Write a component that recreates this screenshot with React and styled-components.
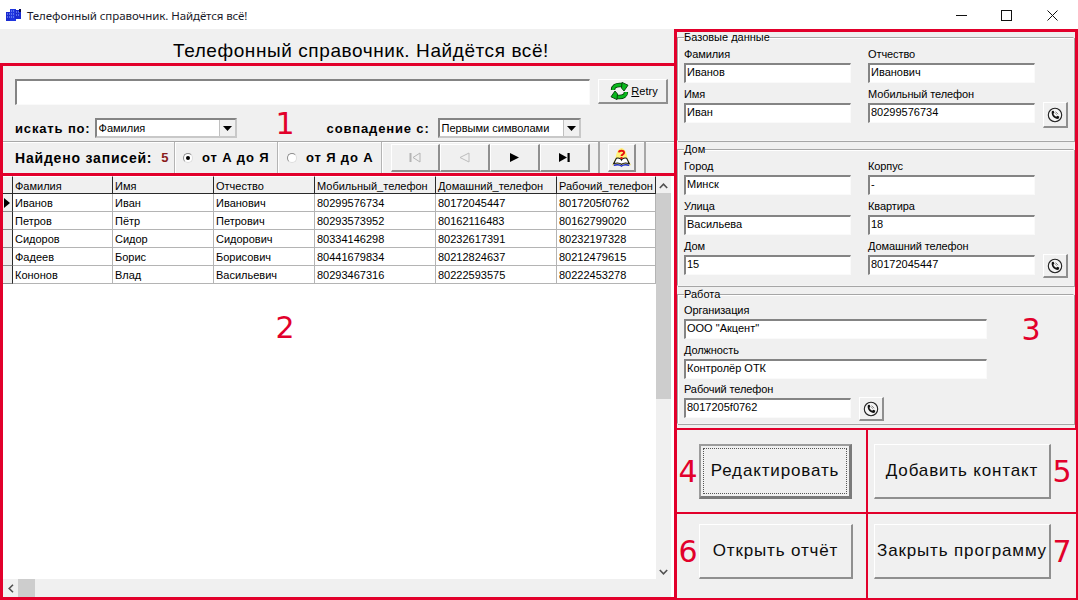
import React from "react";
import styled, { createGlobalStyle } from "styled-components";

const RED = "#e2002b";
const UI = `"Liberation Sans", Arial, sans-serif`;

const Global = createGlobalStyle`
  html, body { margin: 0; padding: 0; background: #f0f0f0; overflow: hidden; }
  #root { width: 1078px; height: 600px; }
  * { box-sizing: border-box; }
`;

const Win = styled.div`
  position: relative;
  width: 1078px;
  height: 600px;
  display: flex;
  flex-direction: column;
  background: #f0f0f0;
  font: 11px ${UI};
  color: #000;
`;

const TitleBar = styled.header`
  height: 29px;
  flex: none;
  background: #fff;
  display: flex;
  align-items: center;
  padding-left: 6px;
  padding-top: 1px;
  padding-right: 3px;
`;
const TitleText = styled.span`
  margin-left: 5px;
  font: 11.5px "Noto Sans", sans-serif;
  letter-spacing: -0.08px;
  color: #1a1a2a;
  flex: 1;
`;
const WinControls = styled.div`
  display: flex;
  align-self: stretch;
`;
const WinButton = styled.div`
  width: 45.5px;
  display: flex;
  align-items: center;
  justify-content: center;
`;

const Body = styled.main`
  flex: 1;
  display: grid;
  grid-template-columns: 674px 404px;
  min-height: 0;
`;
const Left = styled.section`
  display: flex;
  flex-direction: column;
  min-height: 0;
`;
const AppHeading = styled.h1`
  margin: 0;
  height: 34px;
  flex: none;
  padding-top: 12px;
  padding-left: 48px;
  text-align: center;
  font: 400 19px/20px ${UI};
  letter-spacing: 0.58px;
`;
const SearchPanel = styled.section`
  height: 113px;
  flex: none;
  border-top: 3px solid ${RED};
  border-left: 3px solid ${RED};
  border-bottom: 3px solid ${RED};
  display: flex;
  flex-direction: column;
`;
const SearchTop = styled.div`
  padding: 13px 6px 0 12px;
  height: 75px;
  flex: none;
`;
const QueryRow = styled.div`
  display: flex;
  gap: 8px;
`;
const inset = `
  background: #fff;
  border-style: solid;
  border-width: 2px 1px 1px 2px;
  border-color: #848484 #fafafa #fafafa #848484;
`;
const QueryInput = styled.div`
  ${inset}
  width: 575px;
  height: 26px;
`;
const RaisedButton = styled.div`
  background: #f0f0f0;
  border-style: solid;
  border-width: 1px 2px 2px 1px;
  border-color: #fff #8f8f8f #8f8f8f #fff;
  display: flex;
  align-items: center;
  justify-content: center;
`;
const RetryButton = styled(RaisedButton)`
  width: 70px;
  height: 25px;
  gap: 2px;
  padding-left: 3px;
  font: 11px ${UI};
`;
const Mnemonic = styled.span`
  text-decoration: underline;
`;
const FilterRow = styled.div`
  display: flex;
  align-items: center;
  margin-top: 13px;
  height: 20px;
`;
const BoldLabel = styled.span`
  font: 700 13px ${UI};
  letter-spacing: 0.85px;
  white-space: nowrap;
`;
const CountLabel = styled(BoldLabel)`
  font-size: 14px;
  letter-spacing: 0.8px;
`;
const Combo = styled.div`
  width: ${(p) => p.$w}px;
  height: 20px;
  margin-left: ${(p) => p.$ml}px;
  margin-right: ${(p) => p.$mr || 0}px;
  display: flex;
  align-items: center;
  background: #fff;
  border-style: solid;
  border-width: 2px 2px 2px 2px;
  border-color: #848484 #c8c8c8 #c8c8c8 #848484;
  padding-left: 2px;
  font: 11px ${UI};
`;
const ComboText = styled.span`
  flex: 1;
`;
const ComboArrow = styled.div`
  width: 16px;
  align-self: stretch;
  background: #f0f0f0;
  border-left: 1px solid #c0c0c0;
  display: flex;
  align-items: center;
  justify-content: center;
`;
const Toolbar = styled.div`
  flex: 1;
  display: flex;
  border-top: 1px solid #a8a8a8;
  box-shadow: inset 0 1px 0 #fff;
`;
const ToolCell = styled.div`
  width: ${(p) => p.$w}px;
  flex: none;
  display: flex;
  align-items: center;
  padding-left: ${(p) => p.$pl}px;
  border-right: 1px solid #b4b4b4;
  box-shadow: 1px 0 0 #fff;
`;
const Count = styled.span`
  margin-left: 9px;
  font: 700 13px ${UI};
  color: #8a1c1c;
`;
const Radio = styled.span`
  width: 10px;
  height: 10px;
  margin-right: 9px;
  border-radius: 50%;
  background: #fff;
  border: 1px solid #8c8c8c;
  border-right-color: #ddd;
  border-bottom-color: #ddd;
  display: flex;
  align-items: center;
  justify-content: center;
  &::after {
    content: "";
    width: 4px;
    height: 4px;
    border-radius: 50%;
    background: ${(p) => (p.$on ? "#000" : "transparent")};
  }
`;
const NavGroup = styled.div`
  display: flex;
  padding: 2px 0 1px 9px;
  width: 216px;
  flex: none;
`;
const NavButton = styled(RaisedButton)`
  width: ${(p) => p.$w || 50}px;
`;
const BookCell = styled.div`
  width: 48px;
  flex: none;
  display: flex;
  padding: 2px 8px 1px 8px;
  border-left: 2px solid #a8a8a8;
  border-right: 2px solid #a8a8a8;
`;
const BookButton = styled(RaisedButton)`
  width: 32px;
`;

const TablePanel = styled.section`
  flex: 1;
  min-height: 0;
  border-left: 3px solid ${RED};
  border-bottom: 3px solid ${RED};
  display: grid;
  grid-template-columns: 653px 15px 3px;
  grid-template-rows: 1fr 18px;
  background: #fff;
`;
const TableView = styled.div`
  overflow: hidden;
  background: #fff;
`;
const Grid = styled.table`
  table-layout: fixed;
  border-collapse: separate;
  border-spacing: 0;
  width: 653px;
  font: 11px ${UI};
`;
const HeadCell = styled.th`
  height: 18px;
  padding: 1px 0 0 2px;
  font-weight: 400;
  text-align: left;
  white-space: nowrap;
  overflow: hidden;
  background: #f0f0f0;
  border-top: 1px solid #fff;
  border-right: 1px solid #2a2a2a;
  border-bottom: 1px solid #2a2a2a;
`;
const Cell = styled.td`
  height: 18px;
  padding: 0 0 0 2px;
  white-space: nowrap;
  overflow: hidden;
  border-right: 1px solid #b4b4b4;
  border-bottom: 1px solid #b4b4b4;
`;
const IndicatorCell = styled.td`
  height: 18px;
  padding: 0 0 0 1px;
  background: #f0f0f0;
  border-right: 1px solid #2a2a2a;
  border-bottom: 1px solid #8c8c8c;
`;
const VScroll = styled.div`
  grid-column: 2;
  grid-row: 1;
  display: flex;
  flex-direction: column;
  background: #f0f0f0;
  padding-top: 2px;
`;
const ScrollEnd = styled.div`
  height: 15px;
  flex: none;
  display: flex;
  align-items: center;
  justify-content: center;
`;
const VThumb = styled.div`
  height: 206px;
  background: #cdcdcd;
`;
const Spacer = styled.div`
  flex: 1;
`;
const HScroll = styled.div`
  grid-column: 1 / 3;
  grid-row: 2;
  display: flex;
  align-items: stretch;
  background: #f0f0f0;
`;
const HEnd = styled.div`
  width: 15px;
  flex: none;
  display: flex;
  align-items: center;
  justify-content: center;
`;
const HThumb = styled.div`
  width: 17px;
  background: #cdcdcd;
`;

const Right = styled.aside`
  display: flex;
  flex-direction: column;
  min-height: 0;
`;
const InfoPanel = styled.section`
  height: 401px;
  flex: none;
  border-style: solid;
  border-color: ${RED};
  border-width: 3px 3px 2px 3px;
  padding-right: 1px;
`;
const Group = styled.fieldset`
  margin: ${(p) => p.$mt}px 0 0 0;
  height: ${(p) => p.$h}px;
  padding: ${(p) => p.$pt}px 0 0 6px;
  min-width: 0;
  border-color: #a6a6a6 #f4f4f4 #f4f4f4 #a6a6a6;
  border-style: solid;
  border-width: 1px;
  box-shadow: inset 1px 1px 0 #fff, 1px 1px 0 #a6a6a6;
`;
const GroupTitle = styled.legend`
  padding: 0;
  margin-left: 0;
  font: 11px/13px ${UI};
`;
const FieldGrid = styled.div`
  display: grid;
  grid-template-columns: 167px 167px;
  column-gap: 17px;
  row-gap: 4px;
`;
const FieldColumn = styled.div`
  display: flex;
  flex-direction: column;
  gap: ${(p) => p.$gap}px;
`;
const Field = styled.div`
  display: flex;
  flex-direction: column;
  height: 36px;
  margin-top: ${(p) => p.$pull || 0}px;
`;
const FieldLabel = styled.label`
  height: 16px;
  flex: none;
  font: 11px/14px ${UI};
  letter-spacing: -0.1px;
  white-space: nowrap;
`;
const InputRow = styled.div`
  display: flex;
  flex: none;
  gap: 8px;
  align-items: flex-start;
`;
const TextBox = styled.div`
  ${inset}
  width: ${(p) => p.$w || 167}px;
  height: 20px;
  flex: none;
  padding-left: 1px;
  font: 11px/15px ${UI};
  white-space: nowrap;
`;
const PhoneButton = styled(RaisedButton)`
  width: 25px;
  height: ${(p) => p.$h || 24}px;
  flex: none;
  margin-top: -1px;
`;

const ActionGrid = styled.section`
  flex: 1;
  display: grid;
  grid-template-columns: 194px 210px;
  grid-template-rows: 84px 86px;
`;
const ActionCell = styled.div`
  border-style: solid;
  border-color: ${RED};
  border-width: 0 2px 2px ${(p) => (p.$first ? 3 : 0)}px;
  padding: ${(p) => p.$pt}px 0 0 ${(p) => (p.$first ? 22 : 6)}px;
`;
const ActionButton = styled(RaisedButton)`
  width: ${(p) => p.$w}px;
  height: 55px;
  font: 17px ${UI};
  letter-spacing: 0.85px;
  white-space: nowrap;
  color: #0c0c0c;
`;
const FocusedButton = styled(ActionButton)`
  position: relative;
  border-width: 2px 3px 3px 2px;
  border-color: #9c9c9c #7a7a7a #7a7a7a #9c9c9c;
  &::after {
    content: "";
    position: absolute;
    inset: 2px;
    border: 1px dotted #555;
  }
`;
const Badge = styled.span`
  position: absolute;
  left: ${(p) => p.$x}px;
  top: ${(p) => p.$y}px;
  transform: translate(-50%, -50%);
  font: 400 30px/1 "DejaVu Sans", sans-serif;
  color: ${RED};
`;

const AppIcon = () => (
  <svg width="16" height="14" viewBox="0 0 16 14">
    <rect x="0" y="4" width="5" height="9" fill="#1a2bd0" />
    <rect x="4" y="1" width="6" height="12" fill="#2036e0" />
    <rect x="9" y="2" width="6" height="9" fill="#1a2bd0" />
    <path d="M1 6h3M1 9h3M5 3h4M5 6h4M5 9h4M10 4h4M10 7h4" stroke="#9ab4ff" strokeWidth="1" strokeDasharray="1 1" />
    <rect x="13" y="1" width="2" height="3" fill="#0a0a50" />
  </svg>
);

const RetryIcon = () => (
  <svg width="19" height="18" viewBox="0 0 19 18" fill="none">
    <path d="M3 8C3 4.5 6 3 9.5 3H12" stroke="#063a0a" strokeWidth="4.4" />
    <path d="M16 10C16 13.5 13 15 9.5 15H7" stroke="#063a0a" strokeWidth="4.4" />
    <path d="M3 8C3 4.5 6 3 9.5 3H12" stroke="#08b81c" strokeWidth="2.8" />
    <path d="M16 10C16 13.5 13 15 9.5 15H7" stroke="#08b81c" strokeWidth="2.8" />
    <path d="M12 0.4L18 3.2L14 9L11.5 6Z" fill="#08b81c" stroke="#063a0a" strokeWidth="0.9" />
    <path d="M7 17.6L1 14.8L5 9L7.5 12Z" fill="#08b81c" stroke="#063a0a" strokeWidth="0.9" />
  </svg>
);

const PhoneIcon = () => (
  <svg width="16" height="16" viewBox="0 0 16 16">
    <circle cx="8" cy="8" r="6.7" fill="#f4f4f4" stroke="#222" strokeWidth="1.1" />
    <path d="M5 4 L6.6 3.7 L7.4 5.8 L6.4 6.7 C6.8 8 7.9 9.2 9.3 9.7 L10.2 8.7 L12.2 9.6 L12 11.2 C10.8 12.3 9 12 7.4 10.8 C5.4 9.4 4 6.4 5 4 Z" fill="#111" />
    <path d="M8.6 4.6 L11.2 7.2 M8.2 6 L9.8 7.6" stroke="#888" strokeWidth="1" />
  </svg>
);

const DownCaret = () => (
  <svg width="9" height="5" viewBox="0 0 9 5"><path d="M0 0H9L4.5 5Z" fill="#000" /></svg>
);

const NavFirst = () => (
  <svg width="12" height="11" viewBox="0 0 12 11" fill="none" stroke="#b4b4b4">
    <path d="M1.5 1V10" strokeWidth="2" /><path d="M11 1L4 5.5L11 10Z" />
  </svg>
);
const NavPrev = () => (
  <svg width="11" height="11" viewBox="0 0 11 11" fill="none" stroke="#bcbcbc"><path d="M10 1L1 5.5L10 10Z" /></svg>
);
const NavNext = () => (
  <svg width="9" height="9" viewBox="0 0 9 9"><path d="M0 0L9 4.5L0 9Z" fill="#000" /></svg>
);
const NavLast = () => (
  <svg width="11" height="9" viewBox="0 0 11 9"><path d="M0 0L8 4.5L0 9Z" fill="#000" /><rect x="8.5" y="0" width="2.2" height="9" fill="#000" /></svg>
);

const BookIcon = () => (
  <svg width="19" height="19" viewBox="0 0 22 22">
    <path d="M11 0C16 1 17 7 18 12L22 20H0L4 12C5 7 6 1 11 0Z" fill="#fff27a" />
    <path d="M2 18L5 12C7 11 10 12 11 14C12 12 15 11 17 12L20 18C16 17 13 17 11 19C9 17 6 17 2 18Z" fill="#fff" stroke="#111" strokeWidth="1.3" />
    <path d="M2 20C6 19 9 19 11 21C13 19 16 19 20 20" fill="none" stroke="#1a2bd0" strokeWidth="1.6" />
    <path d="M8 5C8.2 2.6 14 2.4 14 5.4C14 7.4 11 7.4 11 9.4" fill="none" stroke="#e81010" strokeWidth="2.2" />
    <rect x="9.8" y="10.4" width="2.4" height="2.2" fill="#e81010" />
  </svg>
);

const columns = [
  ["", 10],
  ["Фамилия", 100],
  ["Имя", 101],
  ["Отчество", 101],
  ["Мобильный_телефон", 121],
  ["Домашний_телефон", 121],
  ["Рабочий_телефон", 99],
];
const rows = [
  ["Иванов", "Иван", "Иванович", "80299576734", "80172045447", "8017205f0762"],
  ["Петров", "Пётр", "Петрович", "80293573952", "80162116483", "80162799020"],
  ["Сидоров", "Сидор", "Сидорович", "80334146298", "80232617391", "80232197328"],
  ["Фадеев", "Борис", "Борисович", "80441679834", "80212824637", "80212479615"],
  ["Кононов", "Влад", "Васильевич", "80293467316", "80222593575", "80222453278"],
];

const LabeledBox = ({ label, value, w, pull, children }) => (
  <Field $pull={pull}>
    <FieldLabel>{label}</FieldLabel>
    <InputRow>
      <TextBox $w={w}>{value}</TextBox>
      {children}
    </InputRow>
  </Field>
);

export default function App() {
  return (
    <Win>
      <Global />
      <TitleBar>
        <AppIcon />
        <TitleText>Телефонный справочник. Найдётся всё!</TitleText>
        <WinControls>
          <WinButton>
            <svg width="11" height="11" viewBox="0 0 11 11"><path d="M0 5.5H11" stroke="#111" /></svg>
          </WinButton>
          <WinButton>
            <svg width="11" height="11" viewBox="0 0 11 11"><rect x="0.5" y="0.5" width="10" height="10" fill="none" stroke="#111" /></svg>
          </WinButton>
          <WinButton>
            <svg width="11" height="11" viewBox="0 0 11 11"><path d="M0.5 0.5L10.5 10.5M10.5 0.5L0.5 10.5" stroke="#111" /></svg>
          </WinButton>
        </WinControls>
      </TitleBar>
      <Body>
        <Left>
          <AppHeading>Телефонный справочник. Найдётся всё!</AppHeading>
          <SearchPanel>
            <SearchTop>
              <QueryRow>
                <QueryInput />
                <RetryButton>
                  <RetryIcon />
                  <span><Mnemonic>R</Mnemonic>etry</span>
                </RetryButton>
              </QueryRow>
              <FilterRow>
                <BoldLabel>искать по:</BoldLabel>
                <Combo $w={142} $ml={4} $mr={90}>
                  <ComboText>Фамилия</ComboText>
                  <ComboArrow><DownCaret /></ComboArrow>
                </Combo>
                <BoldLabel>совпадение с:</BoldLabel>
                <Combo $w={143} $ml={8}>
                  <ComboText>Первыми символами</ComboText>
                  <ComboArrow><DownCaret /></ComboArrow>
                </Combo>
              </FilterRow>
            </SearchTop>
            <Toolbar>
              <ToolCell $w={172} $pl={12}>
                <CountLabel>Найдено записей:</CountLabel>
                <Count>5</Count>
              </ToolCell>
              <ToolCell $w={103} $pl={8}>
                <Radio $on />
                <BoldLabel>от А до Я</BoldLabel>
              </ToolCell>
              <ToolCell $w={104} $pl={9}>
                <Radio />
                <BoldLabel>от Я до А</BoldLabel>
              </ToolCell>
              <NavGroup>
                <NavButton $w={49}><NavFirst /></NavButton>
                <NavButton><NavPrev /></NavButton>
                <NavButton><NavNext /></NavButton>
                <NavButton><NavLast /></NavButton>
              </NavGroup>
              <BookCell>
                <BookButton><BookIcon /></BookButton>
              </BookCell>
            </Toolbar>
          </SearchPanel>
          <TablePanel>
            <TableView>
              <Grid>
                <colgroup>
                  {columns.map(([name, w]) => (
                    <col key={name} width={w} />
                  ))}
                </colgroup>
                <thead>
                  <tr>
                    {columns.map(([name]) => (
                      <HeadCell key={name}>{name}</HeadCell>
                    ))}
                  </tr>
                </thead>
                <tbody>
                  {rows.map((row, i) => (
                    <tr key={row[0]}>
                      <IndicatorCell>
                        {i === 0 && (
                          <svg width="6" height="10" viewBox="0 0 6 10" style={{ display: "block" }}>
                            <path d="M0 0L6 5L0 10Z" fill="#000" />
                          </svg>
                        )}
                      </IndicatorCell>
                      {row.map((value, j) => (
                        <Cell key={j}>{value}</Cell>
                      ))}
                    </tr>
                  ))}
                </tbody>
              </Grid>
            </TableView>
            <VScroll>
              <ScrollEnd>
                <svg width="9" height="6" viewBox="0 0 9 6"><path d="M0.8 5L4.5 1.2L8.2 5" fill="none" stroke="#505050" strokeWidth="1.6" /></svg>
              </ScrollEnd>
              <VThumb />
              <Spacer />
              <ScrollEnd>
                <svg width="9" height="6" viewBox="0 0 9 6"><path d="M0.8 1L4.5 4.8L8.2 1" fill="none" stroke="#505050" strokeWidth="1.6" /></svg>
              </ScrollEnd>
            </VScroll>
            <HScroll>
              <HEnd>
                <svg width="6" height="9" viewBox="0 0 6 9"><path d="M5 0.8L1.2 4.5L5 8.2" fill="none" stroke="#505050" strokeWidth="1.6" /></svg>
              </HEnd>
              <HThumb />
            </HScroll>
          </TablePanel>
        </Left>
        <Right>
          <InfoPanel>
            <Group $mt={-1} $h={110} $pt={3}>
              <GroupTitle>Базовые данные</GroupTitle>
              <FieldGrid>
                <LabeledBox label="Фамилия" value="Иванов" />
                <LabeledBox label="Отчество" value="Иванович" />
                <LabeledBox label="Имя" value="Иван" />
                <LabeledBox label="Мобильный телефон" value="80299576734">
                  <PhoneButton $h={26}><PhoneIcon /></PhoneButton>
                </LabeledBox>
              </FieldGrid>
            </Group>
            <Group $mt={2} $h={143} $pt={3}>
              <GroupTitle>Дом</GroupTitle>
              <FieldGrid>
                <LabeledBox label="Город" value="Минск" />
                <LabeledBox label="Корпус" value="-" />
                <LabeledBox label="Улица" value="Васильева" />
                <LabeledBox label="Квартира" value="18" />
                <LabeledBox label="Дом" value="15" />
                <LabeledBox label="Домашний телефон" value="80172045447">
                  <PhoneButton><PhoneIcon /></PhoneButton>
                </LabeledBox>
              </FieldGrid>
            </Group>
            <Group $mt={2} $h={136} $pt={2}>
              <GroupTitle>Работа</GroupTitle>
              <FieldColumn $gap={4}>
                <LabeledBox label="Организация" value={'ООО "Акцент"'} w={303} />
                <LabeledBox label="Должность" value="Контролёр ОТК" w={303} />
                <LabeledBox label="Рабочий телефон" value="8017205f0762" pull={-1}>
                  <PhoneButton><PhoneIcon /></PhoneButton>
                </LabeledBox>
              </FieldColumn>
            </Group>
          </InfoPanel>
          <ActionGrid>
            <ActionCell $first $pt={14}>
              <FocusedButton $w={153}>Редактировать</FocusedButton>
            </ActionCell>
            <ActionCell $pt={14}>
              <ActionButton $w={177}>Добавить контакт</ActionButton>
            </ActionCell>
            <ActionCell $first $pt={10}>
              <ActionButton $w={154}>Открыть отчёт</ActionButton>
            </ActionCell>
            <ActionCell $pt={10}>
              <ActionButton $w={177}>Закрыть программу</ActionButton>
            </ActionCell>
          </ActionGrid>
        </Right>
      </Body>
      <Badge $x={285} $y={124}>1</Badge>
      <Badge $x={285} $y={328}>2</Badge>
      <Badge $x={1031} $y={330}>3</Badge>
      <Badge $x={688} $y={472}>4</Badge>
      <Badge $x={1062} $y={472}>5</Badge>
      <Badge $x={688} $y={552}>6</Badge>
      <Badge $x={1062} $y={552}>7</Badge>
    </Win>
  );
}
